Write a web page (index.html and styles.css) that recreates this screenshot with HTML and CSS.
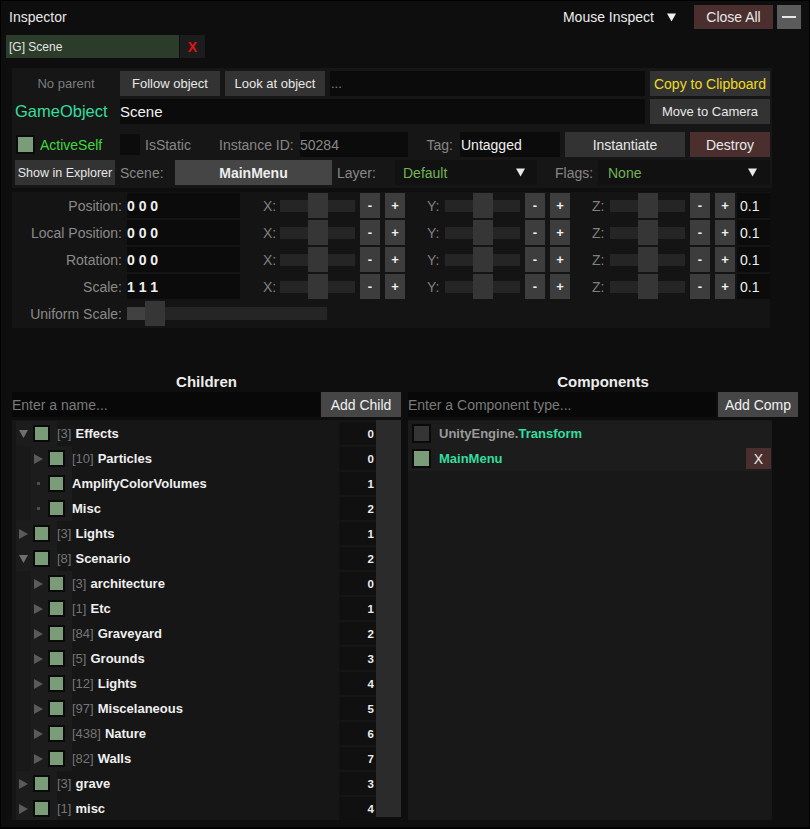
FILE: index.html
```html
<!DOCTYPE html>
<html>
<head>
<meta charset="utf-8">
<title>Inspector</title>
<link rel="stylesheet" href="styles.css">
</head>
<body>
<div class="win">
  <div class="hdr">
    <div class="title">Inspector</div>
    <div class="hdr-right">
      <span class="mouse">Mouse Inspect</span>
      <svg class="caret-w" width="9" height="9" viewBox="0 0 9 9"><path d="M0 0.5H9L4.5 8.5Z" fill="#f0f0f0"/></svg>
      <div class="btn red closeall">Close All</div>
      <div class="btn minbtn"><span class="minbar"></span></div>
    </div>
  </div>

  <div class="tabs">
    <div class="tab">[G] Scene</div>
    <div class="tabx">X</div>
  </div>

  <div class="info">
    <div class="row">
      <div class="cell108 muted center">No parent</div>
      <div class="btn w100">Follow object</div>
      <div class="btn w100 ml5">Look at object</div>
      <div class="inp w315 ml5 dots">...</div>
      <div class="btn w120 ml5 yellow">Copy to Clipboard</div>
    </div>
    <div class="row mt3">
      <div class="cell108 go">GameObject</div>
      <div class="inp w525 objname">Scene</div>
      <div class="btn w120 ml5">Move to Camera</div>
    </div>
    <div class="row mt8">
      <div class="cell108 active"><span class="cb green"></span><span class="activelbl">ActiveSelf</span></div>
      <div class="staticbox"></div>
      <div class="lbl isstatic">IsStatic</div>
      <div class="lbl instlbl">Instance ID:</div>
      <div class="inp w108 instval">50284</div>
      <div class="lbl taglbl">Tag:</div>
      <div class="inp w100 tagval">Untagged</div>
      <div class="btn w120 ml5 f14">Instantiate</div>
      <div class="btn red w80 ml5 f14">Destroy</div>
    </div>
    <div class="row mt3">
      <div class="btn explorer">Show in Explorer</div>
      <div class="lbl scenelbl">Scene:</div>
      <div class="btn mainmenu">MainMenu</div>
      <div class="lbl layerlbl">Layer:</div>
      <div class="dd layerdd"><span class="ddtxt">Default</span><svg width="9" height="9" viewBox="0 0 9 9"><path d="M0 0.5H9L4.5 8.5Z" fill="#e8e8e8"/></svg></div>
      <div class="lbl flagslbl">Flags:</div>
      <div class="dd flagsdd"><span class="ddtxt">None</span><svg width="9" height="9" viewBox="0 0 9 9"><path d="M0 0.5H9L4.5 8.5Z" fill="#e8e8e8"/></svg></div>
    </div>
  </div>

  <div class="xform">
    <div class="xrow">
      <div class="xlbl">Position:</div>
      <div class="xval">0 0 0</div>
      <div class="axis">X:</div><div class="slider"><span class="thumb"></span></div><div class="pm">-</div><div class="pm">+</div>
      <div class="axis">Y:</div><div class="slider"><span class="thumb"></span></div><div class="pm">-</div><div class="pm">+</div>
      <div class="axis">Z:</div><div class="slider"><span class="thumb"></span></div><div class="pm">-</div><div class="pm">+</div>
      <div class="step">0.1</div>
    </div>
    <div class="xrow">
      <div class="xlbl">Local Position:</div>
      <div class="xval">0 0 0</div>
      <div class="axis">X:</div><div class="slider"><span class="thumb"></span></div><div class="pm">-</div><div class="pm">+</div>
      <div class="axis">Y:</div><div class="slider"><span class="thumb"></span></div><div class="pm">-</div><div class="pm">+</div>
      <div class="axis">Z:</div><div class="slider"><span class="thumb"></span></div><div class="pm">-</div><div class="pm">+</div>
      <div class="step">0.1</div>
    </div>
    <div class="xrow">
      <div class="xlbl">Rotation:</div>
      <div class="xval">0 0 0</div>
      <div class="axis">X:</div><div class="slider"><span class="thumb"></span></div><div class="pm">-</div><div class="pm">+</div>
      <div class="axis">Y:</div><div class="slider"><span class="thumb"></span></div><div class="pm">-</div><div class="pm">+</div>
      <div class="axis">Z:</div><div class="slider"><span class="thumb"></span></div><div class="pm">-</div><div class="pm">+</div>
      <div class="step">0.1</div>
    </div>
    <div class="xrow">
      <div class="xlbl">Scale:</div>
      <div class="xval">1 1 1</div>
      <div class="axis">X:</div><div class="slider"><span class="thumb"></span></div><div class="pm">-</div><div class="pm">+</div>
      <div class="axis">Y:</div><div class="slider"><span class="thumb"></span></div><div class="pm">-</div><div class="pm">+</div>
      <div class="axis">Z:</div><div class="slider"><span class="thumb"></span></div><div class="pm">-</div><div class="pm">+</div>
      <div class="step">0.1</div>
    </div>
    <div class="xrow">
      <div class="xlbl">Uniform Scale:</div>
      <div class="uslider"><span class="ufill"></span><span class="uthumb"></span></div>
    </div>
  </div>

  <div class="lower">
    <div class="col left">
      <div class="colhdr">Children</div>
      <div class="addrow">
        <div class="inp addinp">Enter a name...</div>
        <div class="btn addbtn">Add Child</div>
      </div>
      <div class="listwrap">
        <div class="tree">
          <div class="trow"><div class="pre"><span class="arr"><svg width="9" height="8" viewBox="0 0 9 8"><path d="M0 0H9L4.5 8Z" fill="#6f6f6f"/></svg></span><span class="cb green"></span></div><span class="ttxt"><span class="cnt">[3]</span><b>Effects</b></span><span class="num">0</span></div>
          <div class="trow"><span class="ind"></span><div class="pre"><span class="arr"><svg width="9" height="10" viewBox="0 0 9 10"><path d="M0 0L9 5L0 10Z" fill="#5a5a5a"/></svg></span><span class="cb green"></span></div><span class="ttxt"><span class="cnt">[10]</span><b>Particles</b></span><span class="num">0</span></div>
          <div class="trow"><span class="ind"></span><div class="pre"><span class="arr"><span class="dot"></span></span><span class="cb green"></span></div><span class="ttxt"><b>AmplifyColorVolumes</b></span><span class="num">1</span></div>
          <div class="trow"><span class="ind"></span><div class="pre"><span class="arr"><span class="dot"></span></span><span class="cb green"></span></div><span class="ttxt"><b>Misc</b></span><span class="num">2</span></div>
          <div class="trow"><div class="pre"><span class="arr"><svg width="9" height="10" viewBox="0 0 9 10"><path d="M0 0L9 5L0 10Z" fill="#5a5a5a"/></svg></span><span class="cb green"></span></div><span class="ttxt"><span class="cnt">[3]</span><b>Lights</b></span><span class="num">1</span></div>
          <div class="trow"><div class="pre"><span class="arr"><svg width="9" height="8" viewBox="0 0 9 8"><path d="M0 0H9L4.5 8Z" fill="#6f6f6f"/></svg></span><span class="cb green"></span></div><span class="ttxt"><span class="cnt">[8]</span><b>Scenario</b></span><span class="num">2</span></div>
          <div class="trow"><span class="ind"></span><div class="pre"><span class="arr"><svg width="9" height="10" viewBox="0 0 9 10"><path d="M0 0L9 5L0 10Z" fill="#5a5a5a"/></svg></span><span class="cb green"></span></div><span class="ttxt"><span class="cnt">[3]</span><b>architecture</b></span><span class="num">0</span></div>
          <div class="trow"><span class="ind"></span><div class="pre"><span class="arr"><svg width="9" height="10" viewBox="0 0 9 10"><path d="M0 0L9 5L0 10Z" fill="#5a5a5a"/></svg></span><span class="cb green"></span></div><span class="ttxt"><span class="cnt">[1]</span><b>Etc</b></span><span class="num">1</span></div>
          <div class="trow"><span class="ind"></span><div class="pre"><span class="arr"><svg width="9" height="10" viewBox="0 0 9 10"><path d="M0 0L9 5L0 10Z" fill="#5a5a5a"/></svg></span><span class="cb green"></span></div><span class="ttxt"><span class="cnt">[84]</span><b>Graveyard</b></span><span class="num">2</span></div>
          <div class="trow"><span class="ind"></span><div class="pre"><span class="arr"><svg width="9" height="10" viewBox="0 0 9 10"><path d="M0 0L9 5L0 10Z" fill="#5a5a5a"/></svg></span><span class="cb green"></span></div><span class="ttxt"><span class="cnt">[5]</span><b>Grounds</b></span><span class="num">3</span></div>
          <div class="trow"><span class="ind"></span><div class="pre"><span class="arr"><svg width="9" height="10" viewBox="0 0 9 10"><path d="M0 0L9 5L0 10Z" fill="#5a5a5a"/></svg></span><span class="cb green"></span></div><span class="ttxt"><span class="cnt">[12]</span><b>Lights</b></span><span class="num">4</span></div>
          <div class="trow"><span class="ind"></span><div class="pre"><span class="arr"><svg width="9" height="10" viewBox="0 0 9 10"><path d="M0 0L9 5L0 10Z" fill="#5a5a5a"/></svg></span><span class="cb green"></span></div><span class="ttxt"><span class="cnt">[97]</span><b>Miscelaneous</b></span><span class="num">5</span></div>
          <div class="trow"><span class="ind"></span><div class="pre"><span class="arr"><svg width="9" height="10" viewBox="0 0 9 10"><path d="M0 0L9 5L0 10Z" fill="#5a5a5a"/></svg></span><span class="cb green"></span></div><span class="ttxt"><span class="cnt">[438]</span><b>Nature</b></span><span class="num">6</span></div>
          <div class="trow"><span class="ind"></span><div class="pre"><span class="arr"><svg width="9" height="10" viewBox="0 0 9 10"><path d="M0 0L9 5L0 10Z" fill="#5a5a5a"/></svg></span><span class="cb green"></span></div><span class="ttxt"><span class="cnt">[82]</span><b>Walls</b></span><span class="num">7</span></div>
          <div class="trow"><div class="pre"><span class="arr"><svg width="9" height="10" viewBox="0 0 9 10"><path d="M0 0L9 5L0 10Z" fill="#5a5a5a"/></svg></span><span class="cb green"></span></div><span class="ttxt"><span class="cnt">[3]</span><b>grave</b></span><span class="num">3</span></div>
          <div class="trow"><div class="pre"><span class="arr"><svg width="9" height="10" viewBox="0 0 9 10"><path d="M0 0L9 5L0 10Z" fill="#5a5a5a"/></svg></span><span class="cb green"></span></div><span class="ttxt"><span class="cnt">[1]</span><b>misc</b></span><span class="num">4</span></div>
        </div>
        <div class="scroll"></div>
      </div>
    </div>

    <div class="col right">
      <div class="colhdr">Components</div>
      <div class="addrow">
        <div class="inp addinp">Enter a Component type...</div>
        <div class="btn addbtn ml2">Add Comp</div>
      </div>
      <div class="complist">
        <div class="crow"><span class="cb grey"></span><span class="ctxt"><span class="ns">UnityEngine.</span><span class="teal">Transform</span></span></div>
        <div class="crow"><span class="cb green"></span><span class="ctxt teal">MainMenu</span><div class="btn red cx">X</div></div>
      </div>
    </div>
  </div>
</div>
</body>
</html>
```

FILE: styles.css
```css
* { box-sizing: border-box; margin: 0; padding: 0; }
html, body { width: 810px; height: 829px; overflow: hidden; background: #000; }
body { font-family: "Liberation Sans", Arial, sans-serif; font-size: 14px; color: #e6e6e6; }

.win {
  width: 810px; height: 829px;
  border: 1px solid #000; border-bottom-width: 2px;
  background: #0e0e0e;
  display: flex; flex-direction: column;
}

/* header */
.hdr { display: flex; align-items: center; justify-content: space-between; height: 24px; margin-top: 4px; padding: 0 8px; }
.title { font-size: 14px; color: #e8e8e8; }
.hdr-right { display: flex; align-items: center; height: 24px; }
.mouse { font-size: 14px; color: #ececec; margin-right: 13px; }
.caret-w { margin-right: 18px; }
.btn {
  display: flex; align-items: center; justify-content: center;
  background: #333; color: #e8e8e8; font-size: 13px; height: 25px; white-space: nowrap;
}
.red { background: #4b2f2f; }
.closeall { width: 79px; height: 24px; font-size: 14px; margin-right: 4px; }
.minbtn { width: 24px; height: 24px; background: #5b5b5b; }
.minbar { width: 14px; height: 2px; background: #e8e8e8; display: block; }

/* tabs */
.tabs { display: flex; height: 23px; margin-top: 6px; padding-left: 5px; }
.tab { width: 173px; background: #2b3c2a; font-size: 12px; color: #e4e4e4; display: flex; align-items: center; padding-left: 3px; }
.tabx { width: 25px; margin-left: 1px; background: #1c1c1c; color: #e11414; font-weight: bold; font-size: 14px; display: flex; align-items: center; justify-content: center; }

/* info panel */
.info { margin: 10px 0 0 11px; width: 760px; height: 120px; background: #161616; padding-top: 3px; }
.row { display: flex; height: 25px; align-items: stretch; }
.mt3 { margin-top: 3px; }
.mt8 { margin-top: 8px; }
.ml5 { margin-left: 5px; }
.ml2 { margin-left: 2px; }
.w80 { width: 80px; }
.w100 { width: 100px; }
.w108 { width: 108px; }
.w120 { width: 120px; }
.w315 { width: 315px; }
.w525 { width: 525px; }
.f14 { font-size: 14px; }
.cell108 { width: 108px; display: flex; align-items: center; }
.center { justify-content: center; }
.muted { color: #7c7c7c; font-size: 13px; }
.inp { background: #0b0b0b; display: flex; align-items: center; }
.dots { color: #8a8a8a; padding-left: 1px; font-size: 13px; }
.yellow { color: #eedc22; font-size: 14px; }
.go { color: #33df9f; font-size: 16.5px; padding-left: 3px; }
.objname { color: #f2f2f2; font-size: 15px; padding-left: 0; }

.active { padding-left: 4px; }
.cb { display: block; width: 19px; height: 19px; border: 2px solid #0a0a0a; flex: none; }
.cb.green { background: #7b9c78; }
.cb.grey { background: #353535; }
.activelbl { color: #3fd93f; font-size: 14px; margin-left: 5px; }
.staticbox { width: 20px; height: 21px; align-self: center; background: #0c0c0c; }
.lbl { display: flex; align-items: center; color: #878787; font-size: 14px; }
.isstatic { width: 79px; padding-left: 5px; }
.instlbl { width: 81px; }
.instval { color: #888; padding-left: 0; }
.taglbl { width: 52px; justify-content: flex-end; padding-right: 7px; }
.tagval { color: #f0f0f0; padding-left: 1px; font-size: 14px; }

.explorer { width: 100px; margin-left: 3px; font-size: 12.5px; }
.scenelbl { width: 60px; padding-left: 5px; }
.mainmenu { width: 157px; background: #454545; font-size: 14px; font-weight: bold; color: #ededed; }
.layerlbl { width: 63px; padding-left: 5px; }
.dd { display: flex; align-items: center; justify-content: space-between; background: #111; }
.ddtxt { color: #72b455; font-size: 14px; }
.layerdd { width: 142px; padding: 0 12px 0 8px; }
.flagslbl { width: 61px; padding-left: 18px; }
.flagsdd { width: 172px; padding: 0 13px 0 10px; }

/* transform panel */
.xform { margin: 4px 0 0 11px; width: 758px; height: 136px; background: #141414; padding-top: 1px; display: flex; flex-direction: column; gap: 2px; }
.xrow { display: flex; height: 25px; align-items: stretch; }
.xlbl { width: 115px; display: flex; align-items: center; justify-content: flex-end; padding-right: 5px; color: #8a8a8a; font-size: 14px; white-space: nowrap; }
.xval { width: 113px; background: #0b0b0b; display: flex; align-items: center; font-weight: bold; font-size: 14px; color: #f0f0f0; }
.axis { width: 40px; display: flex; align-items: center; padding-left: 22px; color: #808080; font-size: 14px; }
.xrow .axis:nth-child(3) { padding-left: 23px; }
.slider { width: 75px; position: relative; display: flex; align-items: center; }
.slider::before { content: ""; display: block; width: 100%; height: 12px; background: #252525; }
.thumb { position: absolute; left: 28px; top: 0; width: 20px; height: 25px; background: #363636; }
.pm { width: 20px; margin-left: 5px; background: #3d3d3d; display: flex; align-items: center; justify-content: center; color: #f0f0f0; font-size: 13px; font-weight: bold; }
.step { width: 33px; margin-left: 2px; background: #0b0b0b; padding-left: 3px; display: flex; align-items: center; color: #f0f0f0; font-size: 14px; }
.uslider { width: 200px; position: relative; display: flex; align-items: center; }
.uslider::before { content: ""; display: block; width: 100%; height: 13px; background: #252525; }
.ufill { position: absolute; left: 0; top: 6px; width: 18px; height: 13px; background: #414141; }
.uthumb { position: absolute; left: 18px; top: 0; width: 20px; height: 25px; background: #363636; }

/* lower */
.lower { display: flex; margin-top: 44px; padding-left: 11px; }
.col { display: flex; flex-direction: column; }
.left { width: 389px; }
.right { width: 390px; margin-left: 7px; }
.colhdr { height: 20px; line-height: 20px; text-align: center; font-weight: bold; font-size: 15px; color: #ececec; }
.addrow { display: flex; height: 25px; }
.addinp { width: 308px; color: #7a7a7a; font-size: 14px; padding-left: 0; background: #080808; }
.addbtn { width: 80px; margin-left: 1px; background: #464646; font-size: 14px; color: #f0f0f0; }
.right .addbtn { margin-left: 2px; }

.listwrap { display: flex; margin-top: 3px; height: 400px; }
.tree { width: 364px; height: 400px; background: #161616; padding: 1px 0 0 4px; overflow: hidden; }
.scroll { width: 25px; height: 397px; background: #2b2b2b; }
.trow { display: flex; align-items: center; height: 25px; }
.ind { width: 15px; height: 25px; background: #191919; flex: none; }
.pre { width: 41px; height: 25px; background: #1c1c1c; display: flex; align-items: center; flex: none; }
.arr { width: 10px; margin-left: 2px; display: flex; align-items: center; justify-content: center; }
.pre .cb { width: 17px; height: 17px; margin-left: 5px; }
.dot { width: 3px; height: 3px; background: #4d4d4d; display: block; }
.ttxt { font-size: 13px; color: #f0f0f0; white-space: nowrap; }
.ttxt b { font-weight: bold; }
.cnt { color: #757575; margin-right: 4px; }
.num { margin-left: auto; width: 37px; height: 23px; background: #101010; font-size: 11.5px; font-weight: bold; color: #ededed; display: flex; align-items: center; justify-content: flex-end; padding-right: 2px; }

.complist { width: 364px; height: 400px; margin-top: 3px; background: #181818; padding-top: 1px; }
.crow { display: flex; align-items: center; height: 25px; background: #1c1c1c; padding-left: 4px; padding-right: 1px; }
.crow .cb { width: 19px; height: 19px; }
.ctxt { margin-left: 8px; font-size: 13px; font-weight: bold; }
.ns { color: #9a9a9a; }
.teal { color: #33dd9f; }
.cx { margin-left: auto; width: 25px; height: 21px; font-size: 14px; color: #e8e8e8; }
```
